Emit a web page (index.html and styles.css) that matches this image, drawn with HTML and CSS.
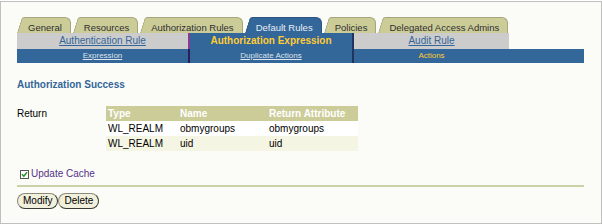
FILE: index.html
```html
<!DOCTYPE html>
<html>
<head>
<meta charset="utf-8">
<link rel="stylesheet" href="styles.css">
</head>
<body>
<div class="frame">
  <div class="tabs">
    <div class="tab">General</div>
    <div class="tab">Resources</div>
    <div class="tab">Authorization Rules</div>
    <div class="tab active">Default Rules</div>
    <div class="tab">Policies</div>
    <div class="tab">Delegated Access Admins</div>
  </div>
  <div class="subnav">
    <div class="cell off"><a href="#">Authentication Rule</a></div>
    <div class="cell on div-a">Authorization Expression</div>
    <div class="cell off div-b"><a href="#">Audit Rule</a></div>
  </div>
  <div class="subnav2">
    <div class="cell2"><a href="#">Expression</a></div>
    <div class="cell2 div-c"><a href="#">Duplicate Actions</a></div>
    <div class="cell2 div-b current">Actions</div>
  </div>
  <h2 class="heading">Authorization Success</h2>
  <div class="field">
    <div class="label">Return</div>
    <table class="grid">
      <colgroup><col class="c1"><col class="c2"><col class="c3"></colgroup>
      <tr><th>Type</th><th>Name</th><th>Return Attribute</th></tr>
      <tr class="r1"><td>WL_REALM</td><td>obmygroups</td><td>obmygroups</td></tr>
      <tr class="r2"><td>WL_REALM</td><td>uid</td><td>uid</td></tr>
    </table>
  </div>
  <div class="check">
    <svg class="box" width="9" height="9" viewBox="0 0 9 9">
      <rect x="0.5" y="0.5" width="8" height="8" fill="#fff" stroke="#555"/>
      <path d="M2 4.3 L3.8 6.3 L7 2.2" fill="none" stroke="#2e9a2e" stroke-width="1.6"/>
    </svg>
    <span class="check-label">Update Cache</span>
  </div>
  <div class="sep"></div>
  <div class="buttons">
    <button class="btn">Modify</button>
    <button class="btn">Delete</button>
  </div>
</div>
</body>
</html>
```
FILE: styles.css
```css
html, body {
  margin: 0;
  background: #ffffff;
}
body {
  font-family: "Liberation Sans", Arial, sans-serif;
  font-size: 10px;
  color: #000;
}
.frame {
  margin-top: 1px;
  height: 223px;
  box-sizing: border-box;
  border: 1px solid #c0c0c0;
  background: #fbfcf8;
  padding: 15px 17px 0 16px;
}
.tabs {
  display: flex;
  gap: 2px;
  height: 16px;
}
.tab {
  position: relative;
  z-index: 0;
  height: 16px;
  box-sizing: border-box;
  padding: 5px 9px 0 11px;
  line-height: 11px;
  font-size: 9.5px;
  color: #2e2e2e;
  white-space: nowrap;
}
.tab::before {
  content: "";
  position: absolute;
  left: 0;
  top: 0;
  bottom: 0;
  width: 14px;
  background: #cccc99;
  border-left: 1px solid #a6a67c;
  border-top: 1px solid #a6a67c;
  border-top-left-radius: 3px;
  transform: skewX(-17deg);
  transform-origin: 0 100%;
  z-index: -1;
}
.tab::after {
  content: "";
  position: absolute;
  left: 7px;
  right: 0;
  top: 0;
  bottom: 0;
  background: #cccc99;
  border-top: 1px solid #a6a67c;
  border-right: 1px solid #a6a67c;
  border-top-right-radius: 6px;
  z-index: -1;
}
.tab.active {
  color: #e8eef6;
}
.tab.active::before,
.tab.active::after {
  background: #336699;
  border-color: #2a5580;
}
.subnav {
  display: grid;
  grid-template-columns: 171px 164px 157px;
  height: 16px;
  line-height: 16px;
  font-size: 10px;
  text-align: center;
}
.cell.off {
  background: #cccccc;
}
.cell.on {
  background: #336699;
  color: #ffcc33;
  font-weight: bold;
}
.cell a {
  color: #336699;
  text-decoration: underline;
}
.div-a {
  border-left: 2px solid #8c3a90;
}
.div-b {
  border-left: 2px solid #1f355f;
}
.div-c {
  border-left: 2px solid #2a1f5a;
}
.subnav2 {
  display: grid;
  grid-template-columns: 171px 164px 157px;
  height: 14px;
  line-height: 14px;
  font-size: 8px;
  text-align: center;
  background: #336699;
}
.cell2 a {
  color: #dfe4ec;
  text-decoration: underline;
}
.cell2.current {
  color: #ffcc33;
}
.heading {
  margin: 16px 0 0;
  font-size: 10px;
  line-height: 12px;
  font-weight: bold;
  color: #336699;
}
.field {
  display: flex;
  margin-top: 15px;
}
.label {
  width: 89px;
  line-height: 15px;
}
.grid {
  border-collapse: collapse;
  width: 252px;
  font-size: 10px;
}
.grid .c1 { width: 72px; }
.grid .c2 { width: 89px; }
.grid .c3 { width: 91px; }
.grid th,
.grid td {
  padding: 0 0 0 2px;
  height: 15px;
  line-height: 15px;
  text-align: left;
  white-space: nowrap;
}
.grid th {
  background: #cccc99;
  color: #ffffff;
  font-weight: bold;
}
.grid .r1 td {
  background: #ffffff;
}
.grid .r2 td {
  background: #f5f5e4;
}
.check {
  display: flex;
  align-items: center;
  gap: 2px;
  margin-top: 17px;
  padding-left: 3px;
  height: 12px;
  line-height: 12px;
}
.box {
  display: block;
}
.check-label {
  color: #553388;
}
.sep {
  margin-top: 5px;
  height: 2px;
  background: #cbd0a8;
}
.buttons {
  display: flex;
  gap: 0;
  margin-top: 6px;
}
.btn {
  height: 16px;
  box-sizing: border-box;
  padding: 0 5px;
  border: 1px solid #8a8a78;
  border-right-color: #3a3a30;
  border-bottom-color: #3a3a30;
  border-radius: 8px;
  background: #f0f0dc;
  font-family: "Liberation Sans", Arial, sans-serif;
  font-size: 10px;
  line-height: 14px;
  color: #000;
}
```
